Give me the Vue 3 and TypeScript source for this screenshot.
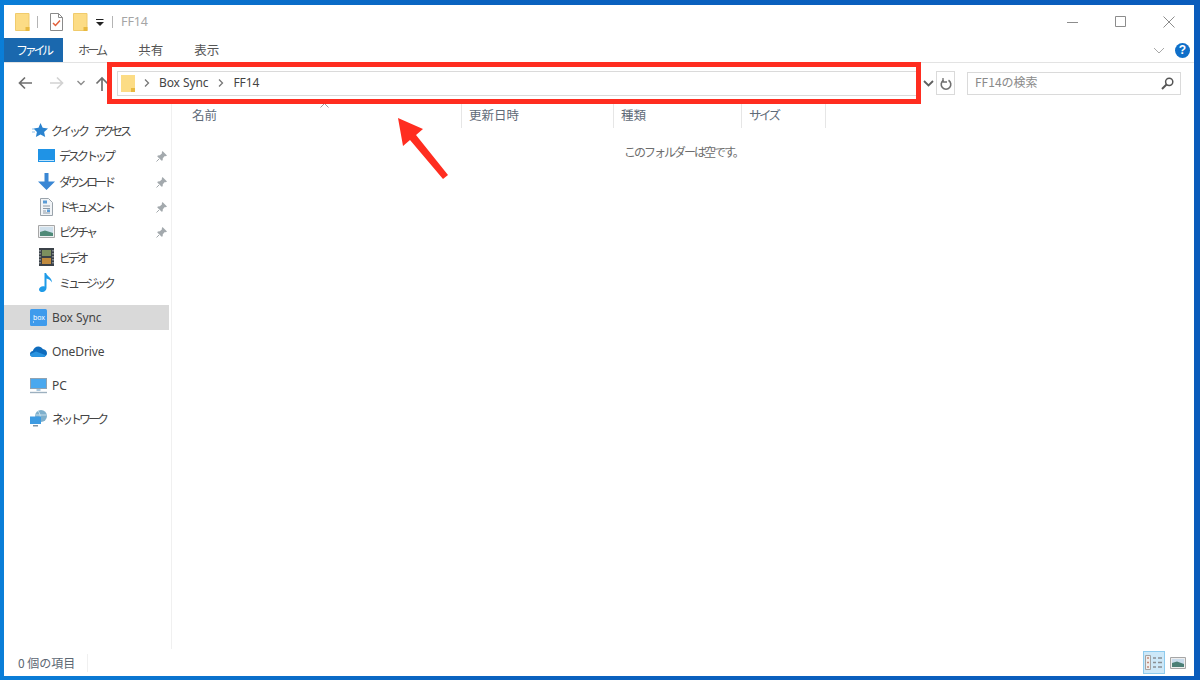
<script setup lang="ts">
interface Row { label: string; icon: string; pin: boolean }
const quick: Row[] = [
  { label: 'デスクトップ', icon: 'desktop', pin: true },
  { label: 'ダウンロード', icon: 'download', pin: true },
  { label: 'ドキュメント', icon: 'doc', pin: true },
  { label: 'ピクチャ', icon: 'pic', pin: true },
  { label: 'ビデオ', icon: 'video', pin: false },
  { label: 'ミュージック', icon: 'music', pin: false },
]
const cols = [
  { label: '名前', width: 287, cls: 'first' },
  { label: '更新日時', width: 152, cls: '' },
  { label: '種類', width: 128, cls: '' },
  { label: 'サイズ', width: 84, cls: 'kanacol' },
]
</script>

<template>
  <div class="window">
    <div class="titlebar">
      <svg class="folder" width="15" height="18" viewBox="0 0 15 18"><path d="M0.5.5h13.500v17H.500z" fill="#fcdc85" stroke="#f0cb6c"/><path d="M10.500 14h4v4h-4z" fill="#e8b93f"/></svg>
      <span class="qsep"></span>
      <svg class="qdoc" width="13" height="18" viewBox="0 0 13 18"><path d="M.5.500h8l4 4v13H.500z" fill="#fff" stroke="#8a8a8a"/><path d="M8.500.500v4h4" fill="none" stroke="#8a8a8a"/><path d="M3 10l2.500 2.500L10 7.500" fill="none" stroke="#e2603a" stroke-width="1.500"/></svg>
      <svg class="folder2" width="15" height="18" viewBox="0 0 15 18"><path d="M0.5.5h13.500v17H.500z" fill="#fcdc85" stroke="#f0cb6c"/><path d="M10.500 14h4v4h-4z" fill="#e8b93f"/></svg>
      <svg class="qdrop" width="8" height="8" viewBox="0 0 8 8"><path d="M0 .5h7.500" stroke="#222"/><path d="M0 3h8L4 7z" fill="#222"/></svg>
      <span class="qsep sep2"></span>
      <span class="title latin">FF14</span>
      <div class="controls">
        <svg width="12" height="12" viewBox="0 0 12 12"><path d="M0 6.500h11" stroke="#8c8c8c"/></svg>
        <svg width="12" height="12" viewBox="0 0 12 12"><path d="M.5.500h10v10H.500z" fill="none" stroke="#8c8c8c"/></svg>
        <svg width="12" height="12" viewBox="0 0 12 12"><path d="M.5.500l11 11M11.500.500l-11 11" stroke="#8c8c8c"/></svg>
      </div>
    </div>

    <div class="tabs">
      <span class="tab active">ファイル</span>
      <span class="tab home">ホーム</span>
      <span class="tab share">共有</span>
      <span class="tab view">表示</span>
      <svg class="collapse" width="12" height="7" viewBox="0 0 12 7"><path d="M1 1l5 5 5-5" fill="none" stroke="#a8a8a8"/></svg>
      <span class="help">?</span>
    </div>

    <div class="navrow">
      <svg class="nav-a" width="14" height="14" viewBox="0 0 14 14"><path d="M14 7H1.500M7 1.500L1.500 7 7 12.500" fill="none" stroke="#6f6f6f" stroke-width="1.700"/></svg>
      <svg class="nav-b" width="14" height="14" viewBox="0 0 14 14"><path d="M0 7h12.500M7 1.500L12.500 7 7 12.500" fill="none" stroke="#d2d2d2" stroke-width="1.700"/></svg>
      <svg class="nav-c" width="8" height="6" viewBox="0 0 8 6"><path d="M.5 1L4 4.500 7.500 1" fill="none" stroke="#8c8c8c" stroke-width="1.400"/></svg>
      <svg class="nav-d" width="14" height="15" viewBox="0 0 14 15"><path d="M7 15V2M1.500 7.500L7 2l5.500 5.500" fill="none" stroke="#6f6f6f" stroke-width="1.700"/></svg>
      <div class="address">
        <svg class="addr-folder" width="14" height="17" viewBox="0 0 14 17"><path d="M0 0h14v17H0z" fill="#fcdc85"/><path d="M10 13h4v4h-4z" fill="#e8b93f"/></svg>
        <svg class="chev" width="6" height="8" viewBox="0 0 6 8"><path d="M1 .5L4.500 4 1 7.500" fill="none" stroke="#777" stroke-width="1.300"/></svg>
        <span class="crumb latin">Box Sync</span>
        <svg class="chev chev2" width="6" height="8" viewBox="0 0 6 8"><path d="M1 .5L4.500 4 1 7.500" fill="none" stroke="#777" stroke-width="1.300"/></svg>
        <span class="crumb latin">FF14</span>
      </div>
      <svg class="addr-drop" width="11" height="7" viewBox="0 0 11 7"><path d="M1 1l4.500 4.500L10 1" fill="none" stroke="#5f5f5f" stroke-width="1.800"/></svg>
      <div class="refresh">
        <svg width="12" height="13" viewBox="0 0 12 13"><path d="M8.500 3.300A4.800 4.800 0 1 1 3.500 3.300" fill="none" stroke="#707070" stroke-width="1.600"/><path d="M3 1v4h4" fill="none" stroke="#707070" stroke-width="1.300"/></svg>
      </div>
      <div class="search">
        <span class="placeholder">FF14の検索</span>
        <svg width="13" height="13" viewBox="0 0 13 13"><circle cx="8.200" cy="4.800" r="3.600" fill="none" stroke="#555" stroke-width="1.500"/><path d="M5.500 7.500L1 12" stroke="#555" stroke-width="2"/></svg>
      </div>
    </div>

    <div class="main">
      <nav class="sidebar">
        <div class="row head">
          <svg class="ico" width="16" height="15" viewBox="0 0 16 15"><path d="M8.500 0l2.200 4.800 5.300.6-3.900 3.500 1.100 5.200-4.700-2.700-4.600 2.700 1-5.200L1.500 5.400l5-.6z" fill="#2a83cf"/><path d="M0 6h3M0 9h3" stroke="#8ec1ea"/></svg>
          <span class="kana spaced">クイック アクセス</span>
        </div>
        <div v-for="r in quick" :key="r.label" class="row sub">
          <span class="subicon">
            <svg v-if="r.icon === 'desktop'" width="17" height="13" viewBox="0 0 17 13"><path d="M0 0h17v13H0z" fill="#1f93e6"/><path d="M1 11.500h15" stroke="#bfe3fa"/></svg>
            <svg v-else-if="r.icon === 'download'" class="dl" width="17" height="17" viewBox="0 0 17 17"><path d="M6.500 0h4v8.500H17L8.500 17 0 8.500h6.500z" fill="#3a87d4"/></svg>
            <svg v-else-if="r.icon === 'doc'" width="13" height="18" viewBox="0 0 13 18"><path d="M.5.500h8l4 4v13H.500z" fill="#f1f4f7" stroke="#9aa3ab"/><path d="M3 8h7M3 10.500h7M3 13h3M3 15h7" stroke="#8c99a6"/><path d="M3 2.500h4v3H3zM7 11.500h3v2.500H7z" fill="#5a9bd5"/></svg>
            <svg v-else-if="r.icon === 'pic'" width="17" height="13" viewBox="0 0 17 13"><path d="M.5.500h16v12H.500z" fill="#eef0f2" stroke="#a6a6a6"/><path d="M2 2h13v9H2z" fill="#cfe0ec"/><path d="M2 7l5-1.500 8 2.500v3H2z" fill="#4f8a78"/></svg>
            <svg v-else-if="r.icon === 'video'" width="15" height="18" viewBox="0 0 15 18"><path d="M0 0h15v18H0z" fill="#3b4148"/><path d="M3 2h9v6H3z" fill="#7c8f5e"/><path d="M3 10h9v6H3z" fill="#c08a3e"/><path d="M1 2v14M14 2v14" stroke="#c9ced2" stroke-dasharray="1.500 1.500"/></svg>
            <svg v-else width="14" height="19" viewBox="0 0 14 19"><path d="M5.500 0h1.600c.3 3 5.900 4.500 5.900 9.500-1-2.500-3.800-3.600-5.500-4V15c0 2.200-1.900 4-4 4C1.200 19 0 17.900 0 16.400c0-1.800 2-3.200 4-3.200.6 0 1 .1 1.500.3z" fill="#1f9be8"/></svg>
          </span>
          <span class="kana">{{ r.label }}</span>
          <svg v-if="r.pin" class="pin" width="11" height="11" viewBox="0 0 11 11"><path d="M6.500 0L11 4.500 9.800 5.200 8.800 5 6.800 7.200 6.700 9.300 5.700 9.800 1.300 5.400 1.800 4.400 3.900 4.300 6 2.200 5.800 1.200z" fill="#a3a9ad"/><path d="M3 8L.5 10.500" stroke="#a3a9ad"/></svg>
        </div>

        <div class="row group selected">
          <svg class="ico2" width="17" height="17" viewBox="0 0 17 17"><rect width="17" height="17" rx="1.500" fill="#3f9bec"/><path d="M3 13h1" stroke="#fff"/></svg>
          <span class="boxmark latin">box</span>
          <span class="latin">Box Sync</span>
        </div>
        <div class="row group">
          <svg class="ico2" width="17" height="11" viewBox="0 0 17 11"><path d="M3.500 11C1.500 11 0 9.700 0 8c0-1.600 1.300-2.900 2.800-3C3.500 2.300 5.800.5 8.300.5c2 0 3.600 1 4.500 2.600 2.300.2 4.200 1.900 4.200 4.200 0 2-1.600 3.700-3.800 3.700z" fill="#0f6cbd"/><path d="M3.500 11C1.500 11 0 9.700 0 8.200l6-2.700 9.800 3.800c-.7 1-1.500 1.700-2.600 1.700z" fill="#2a94e0"/></svg>
          <span class="latin">OneDrive</span>
        </div>
        <div class="row group">
          <svg class="ico2" width="17" height="16" viewBox="0 0 17 16"><path d="M0 0h17v11H0z" fill="#8fa3b3"/><path d="M1 1h15v9H1z" fill="#4aa8ee"/><path d="M6.500 11h4v2h-4z" fill="#a9c7dc"/><path d="M0 14.500h17" stroke="#9db0bf" stroke-width="1.400"/></svg>
          <span class="latin">PC</span>
        </div>
        <div class="row group last">
          <svg class="ico2" width="17" height="17" viewBox="0 0 17 17"><circle cx="11" cy="6" r="6" fill="#7fb0cc"/><path d="M8 1c2 2 3 6 2 10M5.500 5h11" fill="none" stroke="#d7e8f2" stroke-width=".8"/><path d="M0 6.500h11v7.500H0z" fill="#3d9be2"/><path d="M3 15h5v1.500H3z" fill="#7f93a3"/></svg>
          <span class="kana">ネットワーク</span>
        </div>
      </nav>

      <section class="content">
        <div class="headers">
          <span v-for="c in cols" :key="c.label" class="col" :class="c.cls" :style="{ width: c.width + 'px' }">{{ c.label }}</span>
        </div>
        <svg class="caret" width="9" height="5" viewBox="0 0 9 5"><path d="M.5 4.500L4.500.5l4 4" fill="none" stroke="#9a9a9a"/></svg>
        <p class="empty">このフォルダーは空です。</p>
      </section>
    </div>

    <div class="status">
      <span class="count">0 個の項目</span>
      <span class="status-sep"></span>
      <span class="viewbtn on">
        <svg width="18" height="15" viewBox="0 0 18 15"><path d="M.5.500h5v14h-5z" fill="#eee" stroke="#a3a3a3"/><path d="M2 3h2M2 7.500h2M2 12h2" stroke="#c58a7a" stroke-width="1.500"/><path d="M8 3h3M13 3h4M8 7.500h3M13 7.500h4M8 12h3M13 12h4" stroke="#8a8f94" stroke-width="1.300"/></svg>
      </span>
      <span class="viewbtn small">
        <svg width="16" height="12" viewBox="0 0 16 12"><path d="M.5.500h15v11H.500z" fill="#eee" stroke="#a6a6a6"/><path d="M2 2h12v8H2z" fill="#c9dcec"/><path d="M2 6l5-1.500L14 7v3H2z" fill="#4b7f76"/></svg>
      </span>
    </div>

    <div class="callout"></div>
    <svg class="arrow" width="60" height="70" viewBox="0 0 60 70">
      <path d="M2 2L27 13 20 19 52 59 47 63 14 24 7 30z" fill="#ff2d20"/>
    </svg>
  </div>
</template>

<style scoped>
.window {
  position: relative;
  box-sizing: border-box;
  width: 1200px;
  height: 680px;
  padding: 5px 6px 4px 4px;
  display: flex;
  flex-direction: column;
  overflow: hidden;
  background: linear-gradient(90deg, #0a7ed8, #0a62bf 40%, #0a5cbc);
  color: #555;
  font-family: "Noto Sans CJK JP", "Noto Sans", sans-serif;
  font-size: 12px;
}
.latin { font-family: "Noto Sans", "Noto Sans CJK JP", sans-serif; letter-spacing: -0.1px; }
.kana { letter-spacing: -3px; }
.spaced { word-spacing: 7px; margin-left: -1px; }
.titlebar {
  height: 33px;
  flex: none;
  background: #fff;
  display: flex;
  align-items: center;
  padding-left: 11px;
}
.folder2 { margin-left: 10px; }
.qsep { width: 1px; height: 12px; background: #b4b4b4; margin: 0 12px 0 7px; }
.qdrop { margin-left: 8px; margin-top: 2px; }
.sep2 { margin: 0 8px 0 8px; }
.title { color: #a5a5a5; font-size: 12.5px; }
.controls {
  margin-left: auto;
  margin-right: 19px;
  display: flex;
  gap: 36px;
}
.tabs {
  height: 24px;
  flex: none;
  background: #fff;
  display: flex;
  align-items: center;
  border-bottom: 1px solid #e3e3e3;
  box-sizing: content-box;
}
.tab { color: #555; font-size: 12.5px; margin-top: -2px; }
.tab.active {
  background: #1a68ae;
  color: #fff;
  height: 24px;
  line-height: 24px;
  width: 59px;
  margin-top: 0;
  padding-left: 12px;
  box-sizing: border-box;
  font-size: 12px;
  letter-spacing: -3.300px;
}
.home { margin-left: 15px; font-size: 12px; letter-spacing: -2.800px; }
.share { margin-left: 33px; }
.view { margin-left: 31px; }
.collapse { margin-left: auto; margin-right: 10px; }
.help {
  width: 15px;
  height: 15px;
  border-radius: 50%;
  background: #0f6fc9;
  color: #fff;
  font: bold 12px/15px "Liberation Sans", sans-serif;
  text-align: center;
  margin-right: 4px;
}
.navrow {
  height: 40px;
  flex: none;
  background: #fff;
  display: flex;
  align-items: center;
  padding-left: 14px;
}
.nav-b { margin-left: 18px; }
.nav-c { margin-left: 13px; margin-top: -1px; }
.nav-d { margin-left: 10px; }
.address {
  box-sizing: border-box;
  width: 801px;
  height: 25px;
  margin-left: 8px;
  padding-left: 3px;
  border: 1px solid #dadada;
  display: flex;
  align-items: center;
  color: #444;
}
.chev { margin: 0 9px 0 9px; flex: none; }
.chev2 { margin: 0 9px 0 10px; }
.crumb { font-size: 12px; margin-top: -2px; }
.addr-drop { margin-left: 5px; }
.refresh {
  box-sizing: border-box;
  width: 19px;
  height: 24px;
  margin-left: 2px;
  border: 1px solid #dadada;
  display: flex;
  align-items: center;
  justify-content: center;
}
.search {
  box-sizing: border-box;
  width: 214px;
  height: 23px;
  margin-left: 12px;
  padding: 0 6px 0 7px;
  border: 1px solid #dadada;
  display: flex;
  align-items: center;
  justify-content: space-between;
  color: #8a8a8a;
}
.placeholder { margin-top: -3px; }
.main { flex: 1; min-height: 0; background: #fff; display: flex; }
.sidebar {
  box-sizing: border-box;
  width: 168px;
  flex: none;
  padding-top: 15px;
  border-right: 1px solid #f0f0f0;
}
.row {
  display: flex;
  align-items: center;
  height: 25.300px;
  position: relative;
  white-space: nowrap;
  color: #444;
}
.head { padding-left: 28px; }
.head .ico { margin-right: 4px; flex: none; }
.subicon { width: 18px; margin-left: 33px; margin-right: 4px; display: flex; justify-content: center; flex: none; }
.pin { position: absolute; left: 152px; top: 8px; }
.group { padding-left: 26px; height: 25px; margin-top: 9px; width: 165px; box-sizing: border-box; }
.group.selected { background: #d9d9d9; margin-top: 10px; }
.group.last { margin-top: 8px; }
.ico2 { flex: none; margin-right: 5px; }
.boxmark {
  position: absolute;
  left: 29px;
  top: 9px;
  color: #fff;
  font-size: 7px;
  line-height: 7px;
}
.content { position: relative; flex: 1; min-width: 0; }
.headers { display: flex; height: 25px; margin-left: 3px; }
.col {
  box-sizing: border-box;
  height: 25px;
  line-height: 24px;
  padding-left: 7px;
  border-right: 1px solid #e6e6e6;
  color: #5f6b78;
  font-size: 12.500px;
}
.first { padding-left: 17px; }
.kanacol { letter-spacing: -2.600px; }
.caret { position: absolute; left: 148px; top: 0; }
.empty { margin: 15px 0 0 452px; line-height: 18px; color: #6d6d6d; letter-spacing: -2px; font-size: 12px; }
.status {
  height: 27px;
  flex: none;
  background: #fff;
  display: flex;
  align-items: center;
  padding-left: 14px;
  color: #5c6773;
}
.count { font-size: 12px; }
.status-sep { width: 1px; height: 18px; background: #f0f0f0; margin-left: 12px; }
.viewbtn {
  box-sizing: border-box;
  width: 22px;
  height: 23px;
  display: flex;
  align-items: center;
  justify-content: center;
}
.viewbtn.on {
  margin-left: auto;
  background: #cde8f8;
  border: 1px solid #8ecbee;
}
.small { width: 16px; margin-left: 5px; margin-right: 8px; }
.callout {
  position: absolute;
  left: 107px;
  top: 62px;
  width: 814px;
  height: 42px;
  box-sizing: border-box;
  border: 5px solid #ff2d20;
}
.arrow { position: absolute; left: 396px; top: 116px; }
</style>
